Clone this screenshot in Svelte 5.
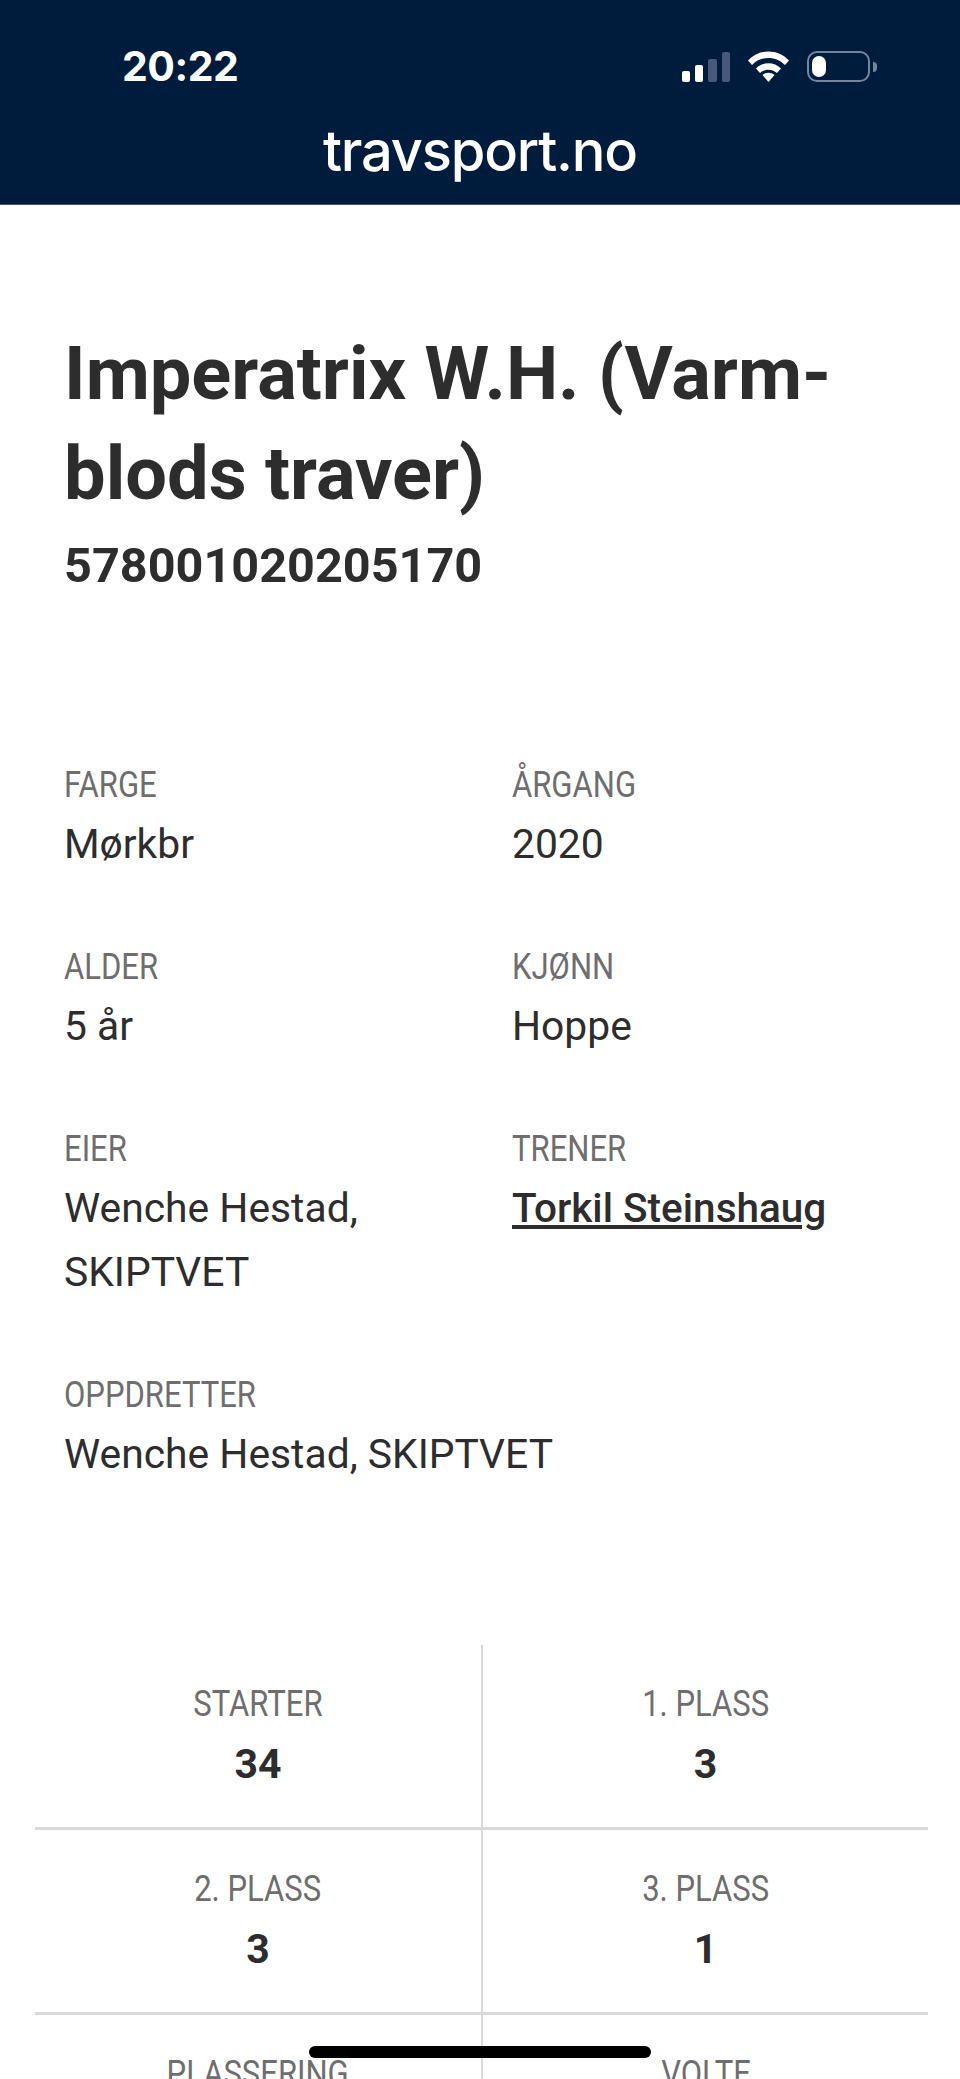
<script>
  const details = [
    { label: 'FARGE', value: 'Mørkbr' },
    { label: 'ÅRGANG', value: '2020' },
    { label: 'ALDER', value: '5 år' },
    { label: 'KJØNN', value: 'Hoppe' },
    { label: 'EIER', value: 'Wenche Hestad, SKIPTVET', narrow: true },
    { label: 'TRENER', value: 'Torkil Steinshaug', link: true },
    { label: 'OPPDRETTER', value: 'Wenche Hestad, SKIPTVET', wide: true }
  ];

  const stats = [
    { label: 'STARTER', value: '34' },
    { label: '1. PLASS', value: '3' },
    { label: '2. PLASS', value: '3' },
    { label: '3. PLASS', value: '1' },
    { label: 'PLASSERING', value: '21%' },
    { label: 'VOLTE', value: '5' }
  ];
</script>

<div class="page">
  <header class="top">
    <div class="status">
      <span class="time">20:22</span>
      <div class="status-icons">
        <svg class="signal" width="48" height="30" viewBox="0 0 48 30">
          <rect x="0" y="19" width="8" height="11" rx="2" fill="#fff" />
          <rect x="13" y="13" width="8" height="17" rx="2" fill="#fff" />
          <rect x="26" y="7" width="9" height="23" rx="2" fill="#47597a" />
          <rect x="40" y="0" width="8" height="30" rx="2" fill="#47597a" />
        </svg>
        <svg class="wifi" width="43" height="32" viewBox="0 0 43 32">
          <path d="M1 10.5 C12 -1.5 31 -1.5 42 10.5 L38 15 C29 5.5 14 5.5 5 15 Z" fill="#fff" />
          <path d="M9 18.5 C16 11.5 27 11.5 34 18.5 L30 23 C25 18.5 18 18.5 13 23 Z" fill="#fff" />
          <path d="M15.5 25 C19 22 24 22 27.5 25 L21.5 32 Z" fill="#fff" />
        </svg>
        <div class="battery">
          <div class="battery-body"><div class="battery-fill"></div></div>
          <div class="battery-nib"></div>
        </div>
      </div>
    </div>
    <div class="site">travsport.no</div>
  </header>

  <main>
    <h1>Imperatrix W.H. (Varm-<br />blods traver)</h1>
    <div class="number">578001020205170</div>

    <div class="details">
      {#each details as d}
        <div class="detail" class:wide={d.wide}>
          <div class="label"><span>{d.label}</span></div>
          {#if d.link}
            <div class="value"><a href="#trener">{d.value}</a></div>
          {:else}
            <div class="value" class:narrow={d.narrow}>{d.value}</div>
          {/if}
        </div>
      {/each}
    </div>

    <div class="stats">
      {#each stats as s}
        <div class="stat">
          <div class="label center"><span>{s.label}</span></div>
          <div class="stat-value">{s.value}</div>
        </div>
      {/each}
    </div>
  </main>

  <div class="home-bar"></div>
</div>

<style>
  :global(body) {
    margin: 0;
    background: #fff;
  }

  .page {
    position: relative;
    height: 2079px;
    overflow: hidden;
    font-family: Roboto, "Liberation Sans", sans-serif;
    color: #2d2d2d;
  }

  .top {
    height: 205px;
    box-sizing: border-box;
    background: #001c3d;
    color: #fff;
    border-bottom: 1px solid #47597a;
  }

  .status {
    display: flex;
    justify-content: space-between;
    align-items: center;
    height: 62px;
    padding: 35px 83px 0 122px;
  }

  .time {
    font-family: Inter, sans-serif;
    font-size: 41px;
    font-weight: 700;
    letter-spacing: -0.5px;
  }

  .status-icons {
    display: flex;
    align-items: flex-end;
    gap: 17px;
  }

  .battery {
    display: flex;
    align-items: center;
    gap: 3px;
  }

  .battery-body {
    width: 63px;
    height: 31px;
    box-sizing: border-box;
    border: 2px solid #75859e;
    border-radius: 10px;
    padding: 3px;
  }

  .battery-fill {
    width: 14px;
    height: 100%;
    background: #fff;
    border-radius: 7px;
  }

  .battery-nib {
    width: 4px;
    height: 10px;
    background: #75859e;
    border-radius: 0 4px 4px 0;
  }

  .site {
    margin-top: 24px;
    text-align: center;
    font-family: Inter, sans-serif;
    font-size: 56px;
    font-weight: 500;
    letter-spacing: -1.2px;
    line-height: 60px;
  }

  main {
    padding-top: 119px;
  }

  h1 {
    margin: 0;
    padding: 0 64px;
    font-size: 74px;
    font-weight: 700;
    line-height: 100px;
  }

  .number {
    margin-top: 14px;
    padding: 0 64px;
    font-size: 48.6px;
    font-weight: 700;
    line-height: 56px;
  }

  .details {
    display: grid;
    grid-template-columns: 448px 1fr;
    row-gap: 67px;
    padding: 167px 64px 0;
  }

  .wide {
    grid-column: 1 / -1;
  }

  .label {
    font-size: 36px;
    line-height: 48px;
    color: #6e6e6e;
    white-space: nowrap;
  }

  .label span {
    display: inline-block;
    transform: scaleX(0.862);
    transform-origin: left center;
  }

  .label.center {
    text-align: center;
  }

  .label.center span {
    transform-origin: center;
  }

  .value {
    margin-top: 3px;
    font-size: 40.8px;
    line-height: 64px;
  }

  .value.narrow {
    max-width: 340px;
  }

  .value a {
    color: inherit;
    font-weight: 500;
    font-size: 40.5px;
    text-decoration: underline;
  }

  .stats {
    display: grid;
    grid-template-columns: 448px 445px;
    margin: 159px 32px 0 35px;
  }

  .stat {
    height: 185px;
    box-sizing: border-box;
    padding-top: 35px;
    text-align: center;
    border-bottom: 3px solid #d9d9d9;
  }

  .stat:nth-child(odd) {
    border-right: 2px solid #d9d9d9;
  }

  .stat-value {
    margin-top: 4px;
    font-size: 41px;
    font-weight: 700;
    line-height: 64px;
  }

  .home-bar {
    position: absolute;
    left: 309px;
    top: 2046px;
    width: 342px;
    height: 12px;
    background: #000;
    border-radius: 6px;
  }
</style>
